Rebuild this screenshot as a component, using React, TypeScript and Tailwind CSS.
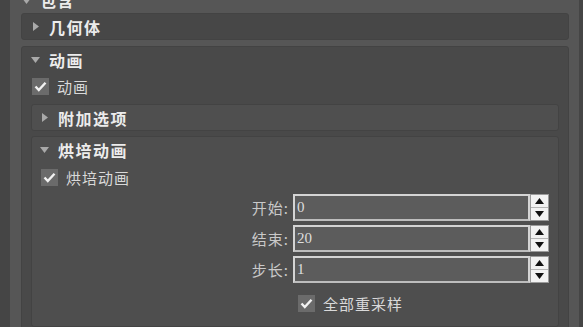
import type { ReactNode } from "react"

const cjk = { fontFamily: '"Noto Sans CJK SC", "Noto Sans", sans-serif' }

const Arrow = ({ open }: { open: boolean }) => (
  <svg width="9" height="9" viewBox="0 0 9 9" className="shrink-0">
    {open ? <polygon points="0,2 9,2 4.5,8" fill="#a9a9a9" /> : <polygon points="2,0 8,4.5 2,9" fill="#a9a9a9" />}
  </svg>
)

const Check = ({ label }: { label: string }) => (
  <div className="flex items-center gap-[8px]">
    <div className="flex h-[17px] w-[17px] items-center justify-center bg-[#6b6b6b]">
      <svg width="13" height="11" viewBox="0 0 13 11">
        <path d="M1.5 5.5 L4.8 9 L11.5 1.8" stroke="#f2f2f2" strokeWidth="2.4" fill="none" />
      </svg>
    </div>
    <span className="text-[15px] leading-none tracking-[1px] text-[#d9d9d9]">{label}</span>
  </div>
)

const Header = ({ title, open, indent }: { title: string; open: boolean; indent: string }) => (
  <div className={`flex h-[25px] items-center gap-[9px] ${indent}`}>
    <Arrow open={open} />
    <span className="text-[16px] font-bold leading-none tracking-[1.5px] text-[#ececec]">{title}</span>
  </div>
)

const Spinner = ({ label, value }: { label: string; value: string }) => (
  <div className="flex h-[27px] items-center justify-end pr-[9px]">
    <span className="mr-[4px] text-[15px] leading-none tracking-[1px] text-[#c9c9c9]">{label}:</span>
    <div className="flex h-full w-[237px] items-center border-2 border-[#d4d4d4] border-b-[#bdbdbd] bg-[#5c5c5c] pl-[2px]">
      <span className="text-[15px] text-[#dedede]" style={{ fontFamily: '"Liberation Serif", serif' }}>
        {value}
      </span>
    </div>
    <div className="flex h-full w-[19px] flex-col border border-[#9a9a9a] bg-[#f2f2f2]">
      <div className="flex flex-1 items-center justify-center border-b border-[#b5b5b5]">
        <svg width="9" height="6" viewBox="0 0 9 6"><polygon points="0,6 9,6 4.5,0" fill="#111" /></svg>
      </div>
      <div className="flex flex-1 items-center justify-center">
        <svg width="9" height="6" viewBox="0 0 9 6"><polygon points="0,0 9,0 4.5,6" fill="#111" /></svg>
      </div>
    </div>
  </div>
)

const Panel = ({ children, className }: { children: ReactNode; className: string }) => (
  <div className={`rounded-[3px] border border-[#434343] ${className}`}>{children}</div>
)

export default function App() {
  return (
    <div className="flex h-[327px] w-[583px] overflow-hidden bg-[#454545]" style={cjk}>
      <div className="ml-[10px] w-[569px] shrink-0 bg-[#565656]">
        <div className="-mt-[13px] flex h-[26px] items-center gap-[9px] pl-[12px]">
          <Arrow open />
          <span className="text-[16px] font-bold leading-none tracking-[1.5px] text-[#ececec]">包含</span>
        </div>
        <div className="flex flex-col gap-[6px] pl-[11px] pr-[10px]">
          <Panel className="bg-[#474747]">
            <Header title="几何体" open={false} indent="pl-[9px]" />
          </Panel>
          <Panel className="h-[300px] bg-[#494949] px-[9px]">
            <Header title="动画" open indent="" />
            <div className="pb-[9px] pl-[1px] pt-[6px]">
              <Check label="动画" />
            </div>
            <div className="flex flex-col gap-[5px]">
              <Panel className="bg-[#4f4f4f]">
                <Header title="附加选项" open={false} indent="pl-[8px]" />
              </Panel>
              <Panel className="h-[191px] bg-[#4e4e4e]">
                <Header title="烘培动画" open indent="pl-[8px]" />
                <div className="pb-[8px] pl-[9px] pt-[7px]">
                  <Check label="烘培动画" />
                </div>
                <div className="flex flex-col gap-[4px]">
                  <Spinner label="开始" value="0" />
                  <Spinner label="结束" value="20" />
                  <Spinner label="步长" value="1" />
                </div>
                <div className="pl-[266px] pt-[12px]">
                  <Check label="全部重采样" />
                </div>
              </Panel>
            </div>
          </Panel>
        </div>
      </div>
    </div>
  )
}
